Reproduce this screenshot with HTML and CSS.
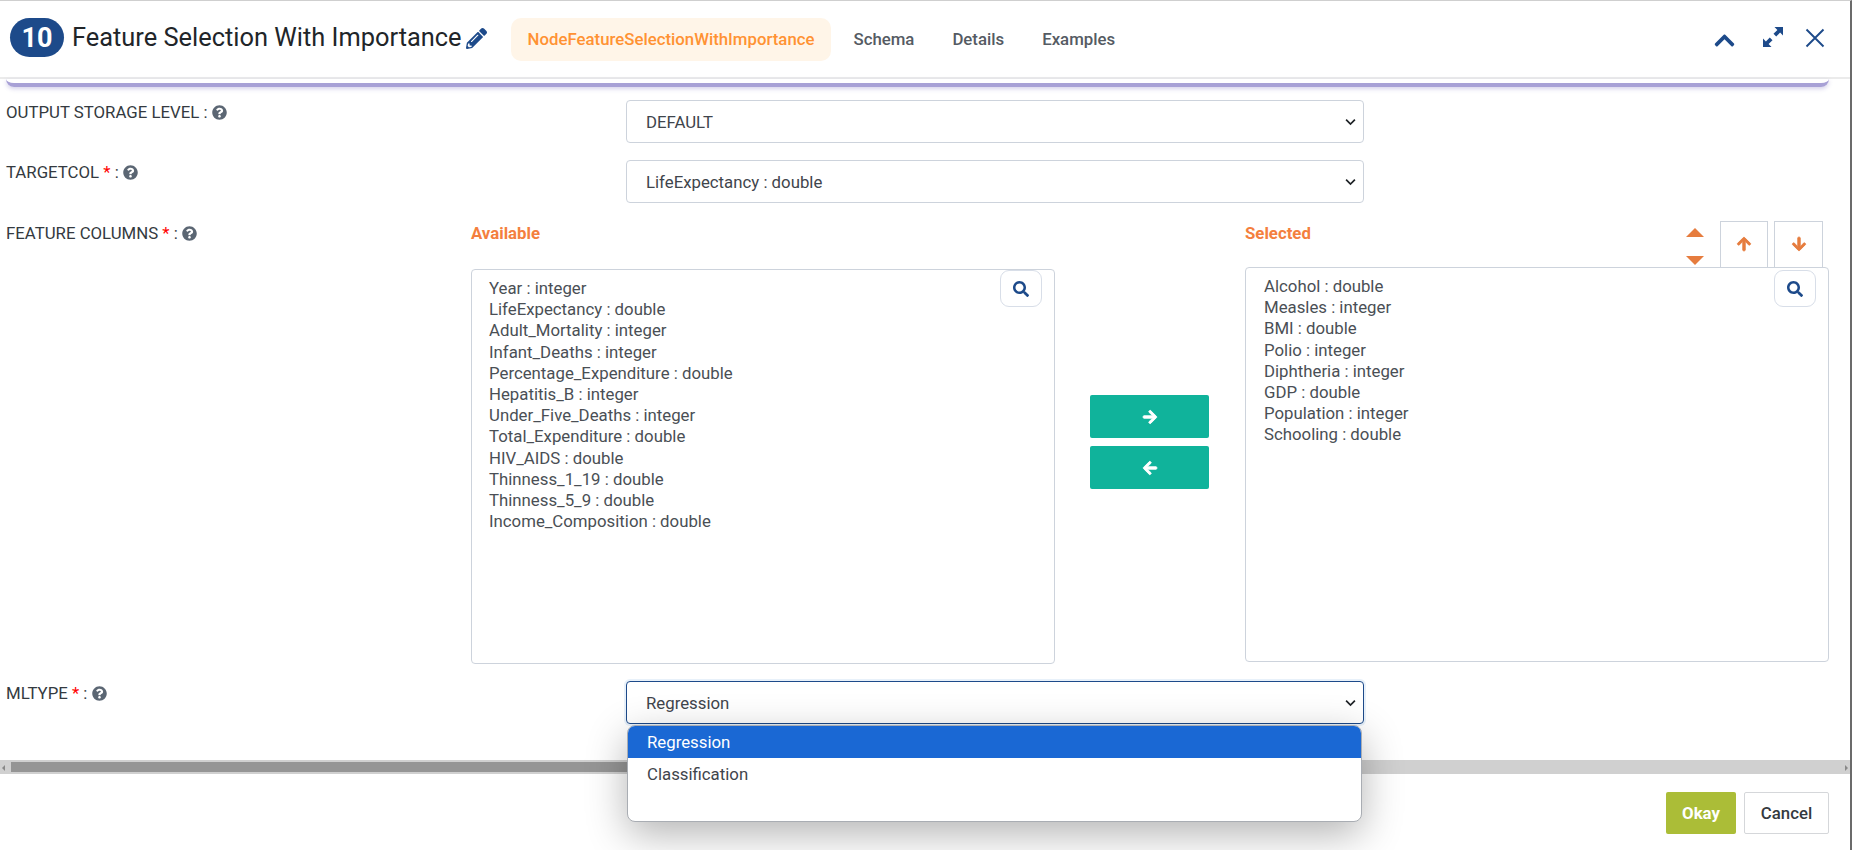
FILE: index.html
```html
<!DOCTYPE html>
<html lang="en">
<head>
<meta charset="utf-8">
<title>Feature Selection With Importance</title>
<link rel="stylesheet" href="styles.css">
</head>
<body>
<svg class="defs" width="0" height="0" aria-hidden="true">
  <symbol id="i-q" viewBox="0 0 512 512"><path d="M504 256c0 136.997-111.043 248-248 248S8 392.997 8 256C8 119.083 119.043 8 256 8s248 111.083 248 248zM262.655 90c-54.497 0-89.255 22.957-116.549 63.758-3.536 5.286-2.353 12.415 2.715 16.258l34.699 26.31c5.205 3.947 12.621 3.008 16.665-2.122 17.864-22.658 30.113-35.797 57.303-35.797 20.429 0 45.698 13.148 45.698 32.958 0 14.976-12.363 22.667-32.534 33.976C247.128 238.528 216 254.941 216 296v4c0 6.627 5.373 12 12 12h56c6.627 0 12-5.373 12-12v-1.333c0-28.462 83.186-29.647 83.186-106.667 0-58.002-60.165-102-116.531-102zM256 338c-25.365 0-46 20.635-46 46 0 25.364 20.635 46 46 46s46-20.636 46-46c0-25.365-20.635-46-46-46z"/></symbol>
  <symbol id="i-search" viewBox="0 0 512 512"><path d="M505 442.7L405.3 343c-4.5-4.5-10.6-7-17-7H372c27.6-35.3 44-79.7 44-128C416 93.1 322.9 0 208 0S0 93.1 0 208s93.1 208 208 208c48.3 0 92.7-16.4 128-44v16.3c0 6.4 2.5 12.5 7 17l99.7 99.7c9.4 9.4 24.6 9.4 33.9 0l28.3-28.3c9.4-9.4 9.4-24.6.1-34zM208 336c-70.7 0-128-57.2-128-128 0-70.7 57.2-128 128-128 70.7 0 128 57.2 128 128 0 70.7-57.2 128-128 128z"/></symbol>
  <symbol id="i-arrow" viewBox="-40 -40 528 592"><path d="M190.5 66.9l22.2-22.2c9.4-9.4 24.6-9.4 33.9 0L441 239c9.4 9.4 9.4 24.6 0 33.9L246.6 467.3c-9.4 9.4-24.6 9.4-33.9 0l-22.2-22.2c-9.5-9.5-9.3-25 .4-34.3L311.4 296H24c-13.3 0-24-10.7-24-24v-32c0-13.3 10.7-24 24-24h287.4L190.9 101.2c-9.8-9.3-10-24.8-.4-34.3z"/></symbol>
</svg>
<div class="modal">
  <header class="head">
    <span class="badge">10</span>
    <h1 class="title">Feature Selection With Importance</h1>
    <svg class="pencil" viewBox="0 0 512 512"><path d="M497.9 142.1l-46.1 46.1c-4.7 4.7-12.3 4.7-17 0l-111-111c-4.7-4.7-4.7-12.3 0-17l46.1-46.1c18.7-18.7 49.1-18.7 67.9 0l60.1 60.1c18.8 18.7 18.8 49.1 0 67.9zM284.2 99.8L21.6 362.4.4 483.9c-2.9 16.4 11.4 30.6 27.8 27.8l121.5-21.3 262.6-262.6c4.7-4.7 4.7-12.3 0-17l-111-111c-4.8-4.7-12.4-4.7-17.1 0zM124.1 339.9c-5.5-5.5-5.5-14.3 0-19.8l154-154c5.5-5.5 14.3-5.5 19.8 0s5.5 14.3 0 19.8l-154 154c-5.5 5.5-14.3 5.5-19.8 0zM88 424h48v36.3l-64.5 11.3-31.1-31.1L51.7 376H88v48z"/></svg>
    <nav class="tabs">
      <a class="tab tab-active">NodeFeatureSelectionWithImportance</a>
      <a class="tab">Schema</a>
      <a class="tab">Details</a>
      <a class="tab">Examples</a>
    </nav>
    <div class="win">
      <svg class="win-up" viewBox="0 0 448 512"><path d="M240.971 130.524l194.343 194.343c9.373 9.373 9.373 24.569 0 33.941l-22.667 22.667c-9.357 9.357-24.522 9.375-33.901.04L224 227.495 69.255 381.516c-9.379 9.335-24.544 9.317-33.901-.04l-22.667-22.667c-9.373-9.373-9.373-24.569 0-33.941L207.03 130.525c9.372-9.373 24.568-9.373 33.941-.001z"/></svg>
      <svg class="win-exp" viewBox="0 0 20 20"><path d="M11.500 0H20v8.500l-2.900-2.900-3.900 3.900-2.700-2.700 3.900-3.900zM8.500 20H0v-8.500l2.900 2.900 3.900-3.900 2.700 2.700-3.900 3.900z"/></svg>
      <svg class="win-x" viewBox="0 0 20 20"><path d="M1.500 1.500l17 17M18.500 1.500l-17 17"/></svg>
    </div>
  </header>

  <main class="body">
    <div class="card-edge"></div>

    <div class="row row-first">
      <label class="lab">OUTPUT STORAGE LEVEL : <svg class="q"><use href="#i-q"/></svg></label>
      <select class="sel"><option>DEFAULT</option></select>
    </div>

    <div class="row">
      <label class="lab">TARGETCOL <b class="req">*</b> : <svg class="q"><use href="#i-q"/></svg></label>
      <select class="sel"><option>LifeExpectancy : double</option></select>
    </div>

    <div class="dual">
      <label class="lab">FEATURE COLUMNS <b class="req">*</b> : <svg class="q"><use href="#i-q"/></svg></label>
      <section class="col col-avail">
        <div class="col-head"><span class="col-title">Available</span></div>
        <div class="list">
          <button class="find"><svg><use href="#i-search"/></svg></button>
          <div>Year : integer</div>
          <div>LifeExpectancy : double</div>
          <div>Adult_Mortality : integer</div>
          <div>Infant_Deaths : integer</div>
          <div>Percentage_Expenditure : double</div>
          <div>Hepatitis_B : integer</div>
          <div>Under_Five_Deaths : integer</div>
          <div>Total_Expenditure : double</div>
          <div>HIV_AIDS : double</div>
          <div>Thinness_1_19 : double</div>
          <div>Thinness_5_9 : double</div>
          <div>Income_Composition : double</div>
        </div>
      </section>
      <div class="move">
        <button class="mv"><svg><use href="#i-arrow"/></svg></button>
        <button class="mv"><svg class="flip"><use href="#i-arrow"/></svg></button>
      </div>
      <section class="col col-sel">
        <div class="col-head">
          <span class="col-title">Selected</span>
          <span class="sort">
            <svg viewBox="0 0 18 9"><path d="M9 0l9 9H0z"/></svg>
            <svg viewBox="0 0 18 9"><path d="M0 0h18L9 9z"/></svg>
          </span>
          <button class="ord"><svg class="up"><use href="#i-arrow"/></svg></button>
          <button class="ord"><svg class="down"><use href="#i-arrow"/></svg></button>
        </div>
        <div class="list list-sel">
          <button class="find"><svg><use href="#i-search"/></svg></button>
          <div>Alcohol : double</div>
          <div>Measles : integer</div>
          <div>BMI : double</div>
          <div>Polio : integer</div>
          <div>Diphtheria : integer</div>
          <div>GDP : double</div>
          <div>Population : integer</div>
          <div>Schooling : double</div>
        </div>
      </section>
    </div>

    <div class="row row-last">
      <label class="lab">MLTYPE <b class="req">*</b> : <svg class="q"><use href="#i-q"/></svg></label>
      <div class="open-wrap">
        <select class="sel sel-focus"><option>Regression</option></select>
        <ul class="menu">
          <li class="opt opt-on">Regression</li>
          <li class="opt">Classification</li>
        </ul>
      </div>
    </div>
  </main>

  <div class="hbar"><span class="nub nub-l"></span><span class="thumb"></span><span class="nub nub-r"></span></div>

  <footer class="foot">
    <button class="btn btn-ok">Okay</button>
    <button class="btn btn-cancel">Cancel</button>
  </footer>
</div>
</body>
</html>
```

FILE: styles.css
```css
* { box-sizing: border-box; }
html, body { margin: 0; height: 100%; }
body { font-family: Roboto, "Liberation Sans", sans-serif; color: #343a40; background: #fff; overflow: hidden; }
.defs { position: absolute; }
svg { display: block; fill: currentColor; }
button { font-family: inherit; cursor: pointer; }

.modal { height: 850px; width: 1852px; display: flex; flex-direction: column; border-top: 1px solid #cfcfcf; border-right: 2px solid #6b6b6b; }

.head { height: 78px; flex: none; display: flex; align-items: flex-start; border-bottom: 2px solid #ebebeb; padding: 17px 0 0 10px; }
.badge { width: 54px; height: 39px; border-radius: 20px; background: #1d4a8a; color: #fff; font-size: 27px; font-weight: 700; display: flex; align-items: center; justify-content: center; }
.title { margin: 0 0 0 8px; font-size: 25.4px; font-weight: 400; line-height: 38px; color: #212529; white-space: nowrap; }
.pencil { width: 21px; height: 21px; margin: 10px 0 0 4px; color: #1d4a8a; }
.tabs { display: flex; margin-left: 24px; }
.tab { height: 43px; line-height: 43px; padding: 0 16px; font-size: 16.8px; font-weight: 500; color: #555b63; border-radius: 10px; margin-right: 6px; }
.tab-active { padding: 0 17px; background: #fff5e8; color: #ff9233; }
.win { margin-left: auto; display: flex; align-items: center; color: #1d4a8a; padding: 6px 0 0; margin-right: 25px; }
.win-up { width: 21px; height: 23px; margin-right: 28px; margin-top: 5px; }
.win-exp { width: 20px; height: 20px; margin-right: 22px; margin-top: -3px; }
.win-x { width: 20px; height: 20px; fill: none; stroke: currentColor; stroke-width: 1.9; margin-top: 0; }

.body { flex: 1; min-height: 0; padding: 0 0 0 6px; position: relative; }
.card-edge { height: 8px; width: 1823px; margin-top: 0; border-radius: 0 0 8px 8px; border-bottom: 4px solid #a8a1d6; box-shadow: 0 2px 4px rgba(120,110,190,.3); }

.row { display: grid; grid-template-columns: 620px 738px; margin-top: 17px; }
.row-first { margin-top: 13px; }
.row-last { margin-top: 17px; }
.lab { font-size: 16.8px; line-height: 20px; color: #343a40; display: flex; align-items: center; height: 20px; white-space: pre; }
.req { color: #f00; font-weight: 400; }
.q { width: 15px; height: 15px; color: #5b6673; }
.row > .lab { margin-top: 2px; }

.sel { width: 738px; height: 43px; border: 1px solid #cdd3dc; border-radius: 4px; background: #fff url("data:image/svg+xml,%3Csvg xmlns='http://www.w3.org/2000/svg' viewBox='0 0 12 8'%3E%3Cpath d='M1.2 1.5 6 6.2l4.8-4.700' fill='none' stroke='%23212529' stroke-width='1.9'/%3E%3C/svg%3E") no-repeat right 7px center / 11px 8px; appearance: none; font: 400 16.8px Roboto, sans-serif; color: #3f454c; padding: 0 30px 0 19px; outline: 0; }
.sel-focus { border-color: #1d4a8a; box-shadow: 0 0 0 2px #e8f1fa; }

.dual { display: grid; grid-template-columns: 465px 584px 190px 584px; margin-top: 18px; }
.dual > .lab { margin-top: 2px; }
.col-head { height: 48px; display: flex; align-items: flex-start; }
.col-sel .col-head { height: 46px; }
.col-title { color: #f47f3e; font-weight: 700; font-size: 16.8px; line-height: 24px; }
.list { height: 395px; border: 1px solid #cdd3dc; border-radius: 4px; padding: 8px 17px; font-size: 16.8px; background: #fff; color: #4a4f55; position: relative; }
.list > div { height: 21.2px; line-height: 21.2px; }
.list-sel { padding-left: 18px; }
.find { position: absolute; top: 0; right: 12px; width: 42px; height: 37px; border: 1px solid #d8dee8; border-radius: 9px; background: #fff; display: flex; align-items: center; justify-content: center; padding: 0; color: #1d4a8a; }
.find svg { width: 16px; height: 16px; }
.list-sel .find { top: 2px; }

.move { padding: 174px 0 0 35px; display: flex; flex-direction: column; gap: 8px; }
.mv { width: 119px; height: 43px; border: 0; border-radius: 2px; background: #10b39b; color: #fff; display: flex; align-items: center; justify-content: center; padding: 0; }
.mv svg { width: 18px; height: 18px; stroke: currentColor; stroke-width: 30px; }
.flip { transform: rotate(180deg); }

.sort { margin-left: auto; margin-top: 7px; width: 18px; height: 37px; display: flex; flex-direction: column; justify-content: space-between; color: #e67c3e; }
.sort svg { width: 18px; height: 9px; }
.ord { width: 48px; height: 46px; margin-left: 16px; border: 1px solid #cdd3dc; border-bottom: 0; background: #fff; display: flex; align-items: center; justify-content: center; padding: 0 0 2px; color: #e67c3e; }
.ord + .ord { margin: 0 6px 0 6px; width: 49px; }
.ord svg { width: 18px; height: 18px; stroke: currentColor; stroke-width: 30px; }
.up { transform: rotate(-90deg); }
.down { transform: rotate(90deg); }

.open-wrap { position: relative; width: 738px; }
.menu { position: absolute; left: 1px; top: 44px; width: 735px; height: 97px; margin: 0; padding: 0; list-style: none; background: #fff; border-radius: 8px; overflow: hidden; border: 1px solid #a9adb3; box-shadow: 0 12px 40px rgba(0,0,0,.3); z-index: 5; }
.opt { height: 32px; line-height: 32px; padding: 0 19px; font-size: 16.8px; color: #3f454c; }
.opt-on { background: #1a68d4; color: #fff; }

.hbar { height: 14px; flex: none; background: #d0d0d0; display: flex; align-items: center; position: relative; }
.thumb { display: block; height: 10px; width: 1300px; margin-left: 11px; background: #959595; }
.nub { display: block; position: absolute; top: 5px; width: 0; height: 0; border: 3px solid transparent; }
.nub-l { left: -1px; border-right-color: #888; }
.nub-r { right: -1px; border-left-color: #888; }

.foot { height: 76px; flex: none; display: flex; justify-content: flex-end; gap: 8px; padding: 18px 21px 0 0; }
.btn { height: 42px; font-size: 16.8px; border-radius: 2px; padding: 0; }
.btn-ok { width: 70px; border: 0; background: #abbd37; color: #fff; font-weight: 700; }
.btn-cancel { width: 85px; border: 1px solid #d5d7da; background: #fff; color: #343a40; font-weight: 500; }
```
